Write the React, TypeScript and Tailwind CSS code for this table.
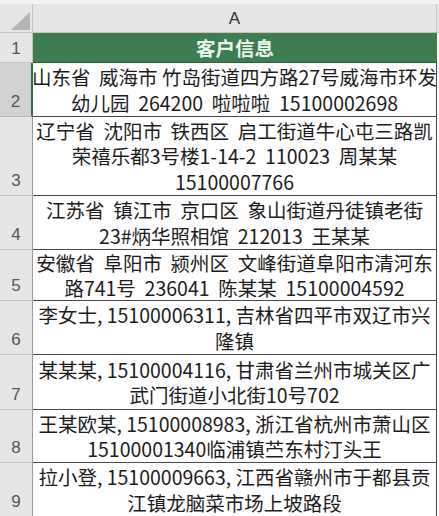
import React from 'react';

// rows of the sheet: height in px, and the wrapped lines as Excel shows them
const rows: { n: number; h: number; lines: string[] }[] = [
  {
    n: 2,
    h: 54,
    lines: ['山东省  威海市 竹岛街道四方路27号威海市环发', '幼儿园  264200  啦啦啦  15100002698'],
  },
  {
    n: 3,
    h: 79,
    lines: ['辽宁省  沈阳市  铁西区  启工街道牛心屯三路凯', '荣禧乐都3号楼1-14-2  110023  周某某', '15100007766'],
  },
  {
    n: 4,
    h: 54,
    lines: ['江苏省  镇江市  京口区  象山街道丹徒镇老街', '23#炳华照相馆  212013  王某某'],
  },
  {
    n: 5,
    h: 51,
    lines: ['安徽省  阜阳市  颍州区  文峰街道阜阳市清河东', '路741号  236041  陈某某  15100004592'],
  },
  { n: 6, h: 54, lines: ['李女士, 15100006311, 吉林省四平市双辽市兴', '隆镇'] },
  { n: 7, h: 55, lines: ['某某某, 15100004116, 甘肃省兰州市城关区广', '武门街道小北街10号702'] },
  { n: 8, h: 53, lines: ['王某欧某, 15100008983, 浙江省杭州市萧山区', '15100001340临浦镇苎东村汀头王'] },
  { n: 9, h: 54, lines: ['拉小登, 15100009663, 江西省赣州市于都县贡', '江镇龙脑菜市场上坡路段'] },
];

export default function App() {
  return (
    <div className="w-[439px] h-[516px] overflow-hidden bg-white font-['Noto_Sans_CJK_SC',sans-serif]">
      {/* column header */}
      <div className="flex h-[33px] bg-[#e6e6e6] border-t-4 border-[#f3f3f3]">
        <div className="w-[33px] flex items-end justify-end p-[2px] border-r border-b border-[#c4c4c4]">
          <svg width="19" height="18" viewBox="0 0 19 18">
            <polygon points="19,0 19,18 0,18" fill="#b4b4b4" />
          </svg>
        </div>
        <div className="w-[404px] flex items-center justify-center border-r border-b border-[#c4c4c4] text-[17px] text-[#333] font-['Liberation_Sans',sans-serif] pt-[2px]">
          A
        </div>
        <div className="flex-1 border-b border-[#c4c4c4]" />
      </div>

      {/* row 1: green title */}
      <div className="flex h-[30px]">
        <div className="w-[33px] flex items-end justify-center pb-[1px] bg-[#e6e6e6] border-r border-b border-[#c4c4c4] text-[17px] text-[#555] font-['Liberation_Sans',sans-serif]">
          1
        </div>
        <div className="w-[404px] flex items-center justify-center bg-[#3e7d52] border-b border-[#2f5e3e] text-[19.5px] font-bold text-[#eaf6ec]">
          客户信息
        </div>
        <div className="flex-1 bg-white" />
      </div>

      {rows.map((r) => (
        <div key={r.n} className="flex" style={{ height: r.h }}>
          <div
            className={
              r.n === 2
                ? 'w-[33px] flex items-end justify-center pb-[2px] bg-[#d2d2d2] border-r-2 border-b border-r-[#2f6b44] border-b-[#b8b8b8] text-[17px] text-[#555] font-["Liberation_Sans",sans-serif]'
                : 'w-[33px] flex items-end justify-center pb-[2px] bg-[#e6e6e6] border-r border-b border-r-[#9a9a9a] border-b-[#c4c4c4] text-[17px] text-[#555] font-["Liberation_Sans",sans-serif]'
            }
          >
            {r.n}
          </div>
          <div className="w-[404px] flex items-center justify-center border-r border-b border-[#4a4a4a] text-[19.5px] leading-[25.5px] text-[#1c1c1c] whitespace-pre text-center">
            {r.lines.join('\n')}
          </div>
          <div className="flex-1 bg-white" />
        </div>
      ))}
    </div>
  );
}
